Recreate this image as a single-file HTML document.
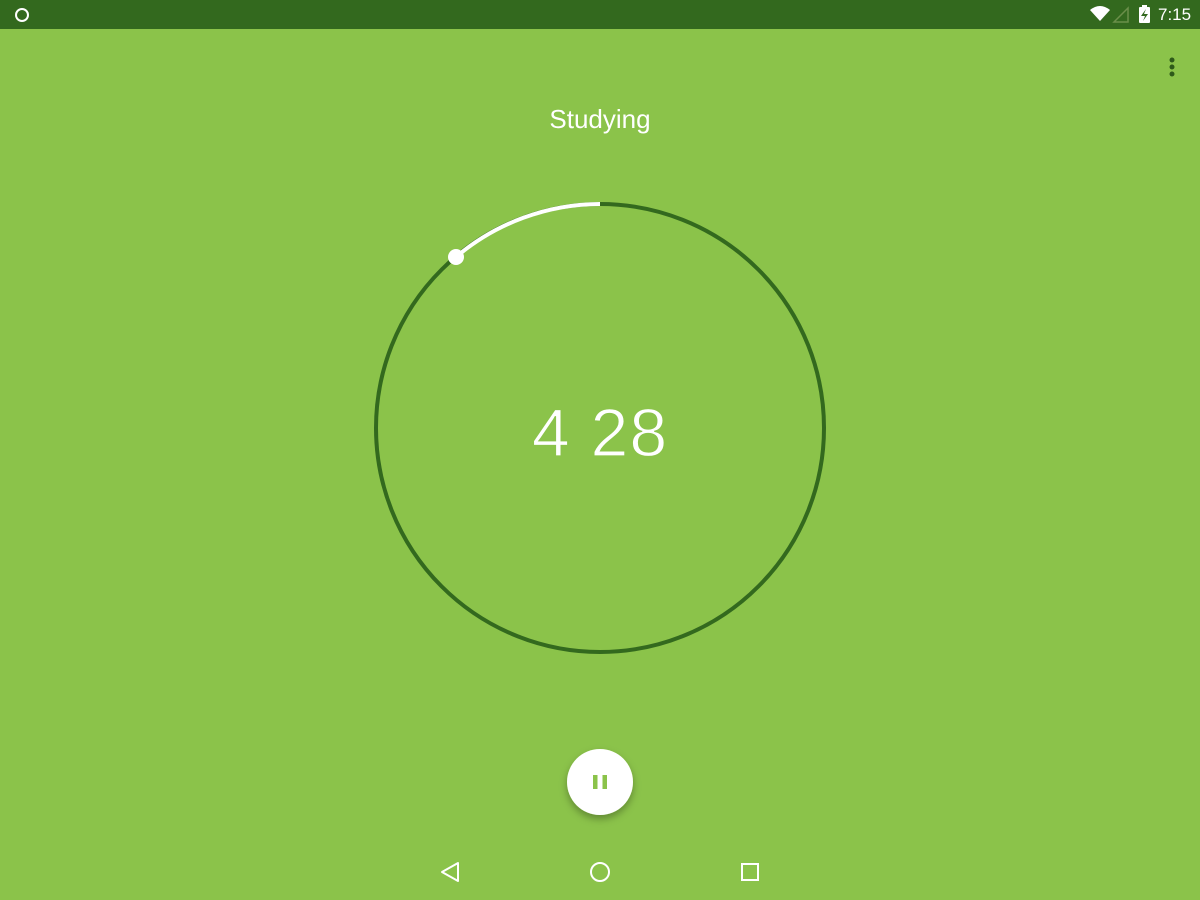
<!DOCTYPE html>
<html><head><style>
body{margin:0;width:1200px;height:900px;background:#8bc34a;position:relative;overflow:hidden;font-family:"Liberation Sans",sans-serif;}
.sb{position:absolute;left:0;top:0;width:1200px;height:29px;background:#33691e;}
.t{position:absolute;color:#fff;}
</style></head><body>
<div class="sb"></div>
<svg width="1200" height="900" style="position:absolute;left:0;top:0">
<circle cx="22" cy="15" r="6" fill="none" stroke="#fff" stroke-width="2"/>
<path d="M1090 10 Q1100 2 1110 10 L1100 21 Z" fill="#fff"/>
<path d="M1128 8 L1128 22 L1114 22 Z" fill="none" stroke="#6b8f4a" stroke-width="1.5"/>
<rect x="1139" y="7" width="11" height="16" rx="1" fill="#fff"/>
<rect x="1142" y="5" width="5" height="3" fill="#fff"/>
<path d="M1146 9 L1141 16 L1145 16 L1143 21 L1148 14 L1144 14 Z" fill="#33691e"/>
<circle cx="1172" cy="60" r="2.5" fill="#2e5a1a"/><circle cx="1172" cy="67" r="2.5" fill="#2e5a1a"/><circle cx="1172" cy="74" r="2.5" fill="#2e5a1a"/>
<circle cx="600" cy="428" r="224" fill="none" stroke="#33691e" stroke-width="4"/>
<path d="M600 204 A224 224 0 0 0 456 257" fill="none" stroke="#fff" stroke-width="4"/>
<circle cx="456" cy="257" r="8" fill="#fff"/>
<text x="600" y="456" text-anchor="middle" font-family="Liberation Sans" font-size="68" fill="#fff" stroke="#8bc34a" stroke-width="1.2" style="letter-spacing:1px">4 28</text>
<defs><filter id="s" x="-50%" y="-50%" width="200%" height="200%"><feDropShadow dx="0" dy="4" stdDeviation="4" flood-opacity="0.3"/></filter></defs>
<circle cx="600" cy="782" r="33" fill="#fff" filter="url(#s)"/>
<rect x="593" y="775" width="4.5" height="14" fill="#8bc34a"/><rect x="602.5" y="775" width="4.5" height="14" fill="#8bc34a"/>
<path d="M458 863 L442 872 L458 881 Z" fill="none" stroke="#fff" stroke-width="2" stroke-linejoin="round"/>
<circle cx="600" cy="872" r="9" fill="none" stroke="#fff" stroke-width="2"/>
<rect x="742" y="864" width="16" height="16" fill="none" stroke="#fff" stroke-width="2"/>
</svg>
<div class="t" style="left:1158px;top:5px;font-size:17px;">7:15</div>
<div class="t" style="left:0;width:1200px;text-align:center;top:104px;font-size:26px;">Studying</div>
</body></html>
